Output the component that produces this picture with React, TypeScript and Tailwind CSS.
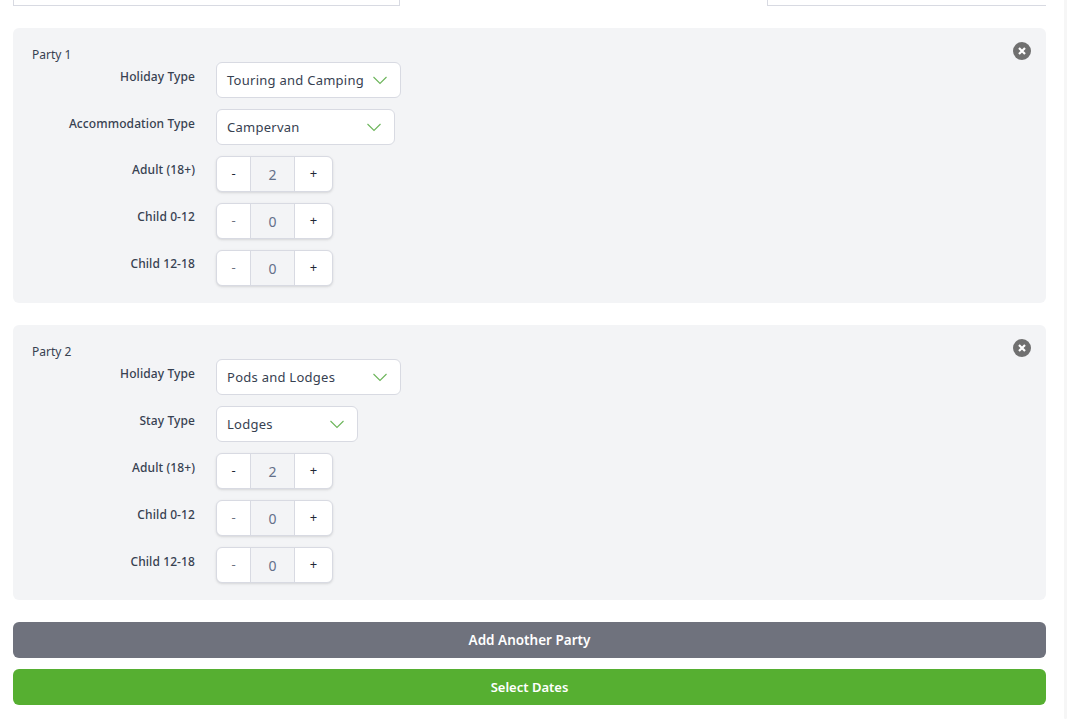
import type { ReactNode } from "react";

const font = { fontFamily: '"Noto Sans", "Open Sans", sans-serif' };

function Chevron() {
  return (
    <svg width="14" height="9" viewBox="0 0 14 9" fill="none" className="shrink-0">
      <path d="M.5 1l6.5 6.5L13.5 1" stroke="#6cb55a" strokeWidth="1.1" />
    </svg>
  );
}

function Close() {
  return (
    <div className="absolute right-[15px] top-[14px] flex h-[18px] w-[18px] items-center justify-center rounded-full bg-[#707070]">
      <svg width="10" height="10" viewBox="0 0 10 10" fill="none">
        <path d="M2 2l6 6M8 2L2 8" stroke="#fff" strokeWidth="2.2" />
      </svg>
    </div>
  );
}

function Row({ label, low, children }: { label: string; low?: boolean; children: ReactNode }) {
  return (
    <div className="flex h-[36px] items-start">
      <div
        className={`w-[163px] shrink-0 whitespace-nowrap text-right text-[12px] leading-[17px] font-medium tracking-[0.1px] text-[#374151] ${low ? "pt-[6px]" : "pt-[5px]"}`}
      >
        {label}
      </div>
      <div className="ml-[21px]">{children}</div>
    </div>
  );
}

function Select({ value, width }: { value: string; width: string }) {
  return (
    <div
      className={`flex h-[36px] ${width} items-center justify-between rounded-md border border-[#d8dae2] bg-white pl-[10px] pr-[13px] text-[13px] tracking-[0.26px] text-[#374151]`}
    >
      <span className="whitespace-nowrap pt-[1px]">{value}</span>
      <Chevron />
    </div>
  );
}

function Stepper({ value, dim }: { value: number; dim?: boolean }) {
  return (
    <div className="flex h-[36px] w-[117px] overflow-hidden rounded-md border border-[#d8dae2] bg-white text-[13px] shadow-sm">
      <div className={`flex w-[33px] items-center justify-center ${dim ? "text-[#6b7280]" : "text-[#1f2937]"}`}>-</div>
      <div className="flex w-[45px] items-center justify-center border-x border-[#d8dae2] bg-[#f3f4f6] text-[14px] text-[#64708a]">
        {value}
      </div>
      <div className="flex flex-1 items-center justify-center text-[#1f2937]">+</div>
    </div>
  );
}

function Party({ name, lowSteppers, children }: { name: string; lowSteppers?: boolean; children: ReactNode }) {
  return (
    <section className="relative h-[275px] rounded-md bg-[#f3f4f6] pl-[19px]">
      <Close />
      <div className="h-[34px] pt-[18px] text-[12px] leading-[17px] text-[#374151]">{name}</div>
      <div className="flex flex-col gap-[11px]">
        {children}
        <Row label="Adult (18+)" low={lowSteppers}><Stepper value={2} /></Row>
        <Row label="Child 0-12" low={lowSteppers}><Stepper value={0} dim /></Row>
        <Row label="Child 12-18" low={lowSteppers}><Stepper value={0} dim /></Row>
      </div>
    </section>
  );
}

export default function App() {
  return (
    <div className="flex h-[719px] w-[1069px] overflow-hidden bg-white" style={font}>
      <main className="w-[1064px] shrink-0 pl-[13px] pr-[18px]">
        <div className="flex h-[6px] justify-between">
          <div className="h-[6px] w-[387px] border-x border-b border-[#d8dae2]" />
          <div className="h-[6px] w-[279px] border-l border-b border-[#d8dae2]" />
        </div>
        <div className="mt-[22px] flex flex-col gap-[22px]">
          <Party name="Party 1">
            <Row label="Holiday Type" low><Select value="Touring and Camping" width="w-[185px]" /></Row>
            <Row label="Accommodation Type" low><Select value="Campervan" width="w-[179px]" /></Row>
          </Party>
          <Party name="Party 2" lowSteppers>
            <Row label="Holiday Type" low><Select value="Pods and Lodges" width="w-[185px]" /></Row>
            <Row label="Stay Type" low><Select value="Lodges" width="w-[142px]" /></Row>
          </Party>
        </div>
        <button className="mt-[22px] flex h-[36px] w-full items-center justify-center rounded-md bg-[#6f727d] pt-[1px] text-[13.5px] font-semibold text-white">
          Add Another Party
        </button>
        <button className="mt-[11px] flex h-[36px] w-full items-center justify-center rounded-md bg-[#56af31] pt-[1px] text-[13px] font-semibold text-white">
          Select Dates
        </button>
      </main>
      <div className="h-full w-[3px] rounded-b-sm bg-[#f6f6f6]" />
    </div>
  );
}
